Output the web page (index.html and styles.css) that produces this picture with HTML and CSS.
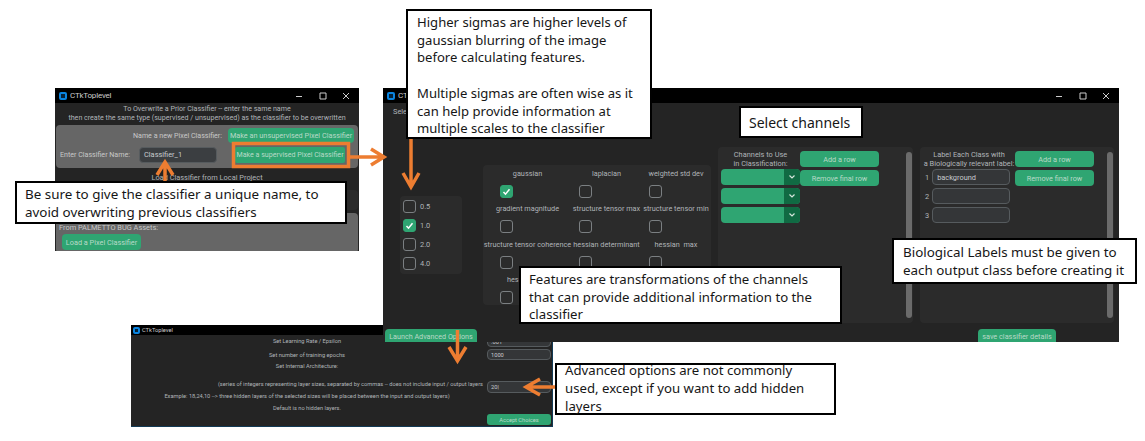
FILE: index.html
```html
<!DOCTYPE html>
<html lang="en">
<head>
  <meta charset="UTF-8" />
  <title>Pixel Classifier Setup</title>
  <link rel="stylesheet" href="styles.css">
</head>
<body>
<div class="canvas">

  <!-- window: advanced options (sits under the main window) -->
  <div class="window win-advanced">
    <div class="titlebar small">
      <span class="app-icon"></span><span class="title">CTkToplevel</span>
    </div>
    <div class="adv-body">
      <div class="adv-text">
        <p>Set Learning Rate / Epsilon</p>
        <p class="adv-m1">Set number of training epochs</p>
        <p>Set Internal Architecture:</p>
        <p class="adv-m2 adv-right">(series of integers representing layer sizes, separated by commas -- does not include input / output layers</p>
        <p class="adv-m3">Example: 18,24,10 --&gt; three hidden layers of the selected sizes will be placed between the input and output layers)</p>
        <p class="adv-m3">Default is no hidden layers.</p>
      </div>
      <div class="adv-inputs">
        <div class="entry adv-entry">.001</div>
        <div class="entry adv-entry adv-m4">1000</div>
        <div class="entry adv-entry adv-m5">20|</div>
        <div class="btn adv-btn">Accept Choices</div>
      </div>
    </div>
  </div>

  <!-- window: name classifier -->
  <div class="window win-name">
    <div class="titlebar">
      <span class="app-icon"></span><span class="title">CTkToplevel</span>
      <span class="controls">
        <svg width="60" height="10" viewBox="0 0 60 10"><path d="M3 5.500h6M27 2h6v6h-6zM50 2l6 6M56 2l-6 6" fill="none" stroke="#ccc" stroke-width="1"/></svg>
      </span>
    </div>
    <div class="name-intro">
      <p>To Overwrite a Prior Classifier -- enter the same name</p>
      <p>then create the same type (supervised / unsupervised) as the classifier to be overwritten</p>
    </div>
    <div class="name-panel">
      <div class="name-row1">
        <span>Name a new Pixel Classifier:</span>
        <div class="btn btn-unsup">Make an unsupervised Pixel Classifier</div>
      </div>
      <div class="name-row2">
        <span class="name-label">Enter Classifier Name:</span>
        <div class="entry name-entry">Classifier_1</div>
        <div class="btn btn-sup">Make a supervised Pixel Classifier</div>
      </div>
    </div>
    <p class="load-heading">Load Classifier from Local Project</p>
    <div class="load-dark"></div>
    <div class="load-panel">
      <p>From PALMETTO BUG Assets:</p>
      <div class="btn btn-load">Load a Pixel Classifier</div>
    </div>
  </div>

  <!-- window: main classifier details -->
  <div class="window win-main">
    <div class="titlebar">
      <span class="app-icon"></span><span class="title">CTkToplevel</span>
      <span class="controls">
        <svg width="60" height="10" viewBox="0 0 60 10"><path d="M3 5.500h6M27 2h6v6h-6zM50 2l6 6M56 2l-6 6" fill="none" stroke="#ccc" stroke-width="1"/></svg>
      </span>
    </div>
    <div class="main-top">Select sigmas</div>
    <div class="main-panels">
      <div class="sigmas">
        <label class="sigma"><span class="check"></span>0.5</label>
        <label class="sigma">
          <span class="check on"><svg width="11" height="11" viewBox="0 0 11 11"><path d="M2.500 6l2 2.200 4-5" fill="none" stroke="#fff" stroke-width="1.500"/></svg></span>1.0
        </label>
        <label class="sigma"><span class="check"></span>2.0</label>
        <label class="sigma"><span class="check"></span>4.0</label>
      </div>

      <div class="features">
        <div class="feature">
          <span>gaussian</span>
          <span class="check on"><svg width="11" height="11" viewBox="0 0 11 11"><path d="M2.500 6l2 2.200 4-5" fill="none" stroke="#fff" stroke-width="1.500"/></svg></span>
        </div>
        <div class="feature"><span>laplacian</span><span class="check"></span></div>
        <div class="feature"><span>weighted std dev</span><span class="check"></span></div>
        <div class="feature"><span>gradient magnitude</span><span class="check"></span></div>
        <div class="feature"><span>structure tensor max</span><span class="check"></span></div>
        <div class="feature"><span>structure tensor min</span><span class="check"></span></div>
        <div class="feature"><span>structure tensor coherence</span><span class="check"></span></div>
        <div class="feature"><span>hessian determinant</span><span class="check"></span></div>
        <div class="feature"><span>hessian&nbsp; max</span><span class="check"></span></div>
        <div class="feature"><span>hessian&nbsp; min</span><span class="check"></span></div>
      </div>

      <div class="table-panel">
        <div class="table-col">
          <p class="table-head">Channels to Use<br>in Classification:</p>
          <div class="dropdown"><span class="drop-arrow"><svg width="8" height="6" viewBox="0 0 8 6"><path d="M1.500 1.500L4 4l2.500-2.500" fill="none" stroke="#d5e5dc" stroke-width="1.200"/></svg></span></div>
          <div class="dropdown"><span class="drop-arrow"><svg width="8" height="6" viewBox="0 0 8 6"><path d="M1.500 1.500L4 4l2.500-2.500" fill="none" stroke="#d5e5dc" stroke-width="1.200"/></svg></span></div>
          <div class="dropdown"><span class="drop-arrow"><svg width="8" height="6" viewBox="0 0 8 6"><path d="M1.500 1.500L4 4l2.500-2.500" fill="none" stroke="#d5e5dc" stroke-width="1.200"/></svg></span></div>
        </div>
        <div class="table-btns">
          <div class="btn">Add a row</div>
          <div class="btn">Remove final row</div>
        </div>
        <div class="scroll"></div>
      </div>

      <div class="table-panel labels-panel">
        <div class="table-col">
          <p class="table-head">Label Each Class with<br>a Biologically relevant label:</p>
          <div class="label-row"><span>1</span><div class="entry">background</div></div>
          <div class="label-row"><span>2</span><div class="entry"></div></div>
          <div class="label-row"><span>3</span><div class="entry"></div></div>
        </div>
        <div class="table-btns">
          <div class="btn">Add a row</div>
          <div class="btn">Remove final row</div>
        </div>
        <div class="scroll"></div>
      </div>
    </div>
    <div class="main-footer">
      <div class="btn btn-launch">Launch Advanced Options</div>
      <div class="btn btn-save">save classifier details</div>
    </div>
  </div>

  <!-- orange highlight + arrows -->
  <svg class="arrows" width="1145" height="441" viewBox="0 0 1145 441">
    <rect x="233.500" y="143.500" width="115" height="23" />
    <path d="M349 157H383M371 149l13 8-13 8" />
    <path d="M165 181V163M157 175l8-13 8 13" />
    <path d="M411 139V186M403 173l8 14 8-14" />
    <path d="M457.500 330V360M449 347l8.500 14 8.500-14" />
    <path d="M555 387H527M540 379l-14 8 14 8" />
  </svg>

  <!-- callouts -->
  <div class="callout c-unique">Be sure to give the classifier a unique name, to<br>avoid overwriting previous classifiers</div>
  <div class="callout c-sigmas">Higher sigmas are higher levels of<br>gaussian blurring of the image<br>before calculating features.<br><br>Multiple sigmas are often wise as it<br>can help provide information at<br>multiple scales to the classifier</div>
  <div class="callout c-channels">Select channels</div>
  <div class="callout c-features">Features are transformations of the channels<br>that can provide additional information to the<br>classifier</div>
  <div class="callout c-bio">Biological Labels must be given to<br>each output class before creating it</div>
  <div class="callout c-advanced"><p>Advanced options are not commonly<br>used, except if you want to add hidden<br>layers</p></div>
</div>
</body>
</html>
```

FILE: styles.css
```css
* {
  box-sizing: border-box;
}
body {
  margin: 0;
  background-color: white;
  font-family: Roboto, Arial, sans-serif;
}
p {
  margin: 0;
}
.canvas {
  position: relative;
  width: 1145px;
  height: 441px;
  overflow: hidden;
  background-color: white;
}

/* windows */
.window {
  position: absolute;
  background-color: #242424;
  color: #b0b4b8;
  font-size: 7.400px;
  overflow: hidden;
}
.win-name {
  left: 55px;
  top: 88px;
  width: 304px;
  height: 163px;
}
.win-main {
  left: 383px;
  top: 88px;
  width: 736px;
  height: 254px;
}
.win-advanced {
  left: 131px;
  top: 325px;
  width: 422px;
  height: 102px;
  font-size: 5.700px;
  border-right: 1px solid #123a55;
  border-bottom: 1px solid #123a55;
}
.titlebar {
  display: flex;
  align-items: center;
  height: 15px;
  padding-left: 4px;
  background-color: black;
  color: #ccc;
  font-size: 8px;
  letter-spacing: -0.2px;
}
.titlebar.small {
  height: 10px;
  padding-left: 2px;
  font-size: 5.700px;
  letter-spacing: 0;
}
.app-icon {
  width: 8px;
  height: 8px;
  margin-right: 3px;
  border: 2px solid #0a84e0;
  border-radius: 2px;
  background-color: #05233a;
}
.titlebar.small .app-icon {
  width: 7px;
  height: 7px;
  margin-right: 2px;
}
.controls {
  display: flex;
  margin-left: auto;
  margin-right: 6px;
}

/* shared widgets */
.btn {
  display: flex;
  align-items: center;
  justify-content: center;
  border-radius: 4px;
  background-color: #2fa572;
  color: #b9dac8;
  font-size: 7.300px;
  white-space: nowrap;
}
.entry {
  display: flex;
  align-items: center;
  padding-left: 4px;
  border: 1px solid #565b5e;
  border-radius: 4px;
  background-color: #343638;
  color: #c8cbce;
}
.check {
  display: flex;
  align-items: center;
  justify-content: center;
  width: 13px;
  height: 13px;
  border: 1.500px solid #7b7f82;
  border-radius: 3px;
  flex-shrink: 0;
}
.check.on {
  border-color: #2fa572;
  background-color: #2fa572;
}

/* name window */
.name-intro {
  height: 22px;
  padding-top: 1px;
  line-height: 9px;
  text-align: center;
  font-size: 7.100px;
  white-space: nowrap;
}
.name-panel {
  height: 43px;
  margin: 0 1px;
  padding: 3px 4px 0 4px;
  border-radius: 4px;
  background-color: #666;
  color: #c8c8c8;
  font-size: 7.100px;
}
.name-row1 {
  display: flex;
  justify-content: flex-end;
  align-items: center;
  gap: 6px;
  height: 15px;
}
.btn-unsup {
  width: 126px;
  height: 15px;
}
.name-row2 {
  display: flex;
  align-items: center;
  height: 17px;
  margin-top: 3px;
  white-space: nowrap;
}
.name-label {
  width: 79px;
}
.name-entry {
  width: 78px;
  height: 16px;
  background-color: #3b3e41;
  font-size: 7.400px;
}
.btn-sup {
  width: 110px;
  height: 16px;
  margin-left: 18px;
  border-radius: 2px;
  font-size: 7.100px;
}
.load-heading {
  margin-top: 5px;
  text-align: center;
  line-height: 10px;
}
.load-dark {
  height: 20px;
  margin: 7px 1px 3px;
  border-radius: 4px;
  background-color: #2b2b2b;
}
.load-panel {
  height: 40px;
  margin: 0 1px;
  padding: 10px 6px 0 3px;
  border-radius: 4px;
  background-color: #666;
  color: #c8c8c8;
}
.btn-load {
  width: 79px;
  height: 16px;
  margin: 2px 0 0 3px;
}

/* main window */
.main-top {
  height: 44px;
  padding: 4px 0 0 10px;
  line-height: 10px;
  white-space: nowrap;
}
.main-panels {
  display: flex;
  align-items: flex-start;
  height: 176px;
  padding-left: 17px;
}
.sigmas {
  display: flex;
  flex-direction: column;
  gap: 6.300px;
  width: 62px;
  height: 78px;
  margin: 49px 21px 0 0;
  padding: 3.500px 3px;
  border-radius: 4px;
  background-color: #2b2b2b;
}
.sigma {
  display: flex;
  align-items: center;
  gap: 4px;
}
.features {
  display: grid;
  grid-template-columns: 89px 69px 70px;
  grid-auto-rows: 35.300px;
  width: 228px;
  height: 140px;
  margin: 18px 7px 0 0;
  padding-top: 4px;
  border-radius: 4px;
  background-color: #2b2b2b;
  overflow: hidden;
}
.feature {
  display: flex;
  flex-direction: column;
  align-items: center;
  gap: 6px;
  line-height: 10px;
  white-space: nowrap;
  font-size: 7.300px;
}
/* checkbox sits left of the centred label */
.feature .check {
  margin-right: 42px;
}
.table-panel {
  display: flex;
  position: relative;
  width: 195px;
  height: 176px;
  margin-right: 7px;
  padding: 3px 0 0 3px;
  border-radius: 4px;
  background-color: #2b2b2b;
}
.labels-panel {
  width: 194px;
  margin-right: 0;
}
.table-col {
  display: flex;
  flex-direction: column;
  gap: 3px;
  width: 79px;
}
.labels-panel .table-col {
  width: 92px;
}
.table-head {
  height: 16px;
  margin-bottom: 0;
  line-height: 9px;
  text-align: center;
  white-space: nowrap;
}
.dropdown {
  display: flex;
  justify-content: flex-end;
  height: 16px;
  border-radius: 4px;
  background-color: #2fa572;
  overflow: hidden;
}
.drop-arrow {
  display: flex;
  align-items: center;
  justify-content: center;
  width: 16px;
  background-color: #106a43;
}
.label-row {
  display: flex;
  align-items: center;
  gap: 3px;
  height: 16px;
  padding-left: 2px;
}
.label-row .entry {
  width: 78px;
  height: 16px;
}
.table-btns {
  display: flex;
  flex-direction: column;
  gap: 3px;
  width: 79px;
  margin-top: 1px;
}
.table-btns .btn {
  height: 16px;
}
.scroll {
  position: absolute;
  top: 5px;
  right: 1px;
  width: 6px;
  height: 166px;
  border-radius: 3px;
  background-color: #6b6b6b;
}
.main-footer {
  display: flex;
  justify-content: space-between;
  padding: 6px 63px 0 2px;
}
.btn-launch {
  width: 92px;
  height: 14px;
  border-radius: 4px 4px 0 0;
  font-size: 7.200px;
}
.btn-save {
  width: 78px;
  height: 14px;
  border-radius: 4px 4px 0 0;
}

/* advanced window */
.adv-body {
  display: flex;
  padding-top: 1px;
}
.adv-text {
  width: 352px;
  text-align: center;
  line-height: 11px;
  white-space: nowrap;
}
.adv-m1 {
  margin-top: 2.500px;
}
.adv-m2 {
  margin-top: 7px;
}
.adv-m3 {
  margin-top: 1px;
}
.adv-right {
  text-align: right;
}
.adv-inputs {
  width: 64px;
  margin-left: 4px;
}
.adv-entry {
  height: 11px;
  padding-left: 3px;
}
.adv-m4 {
  margin-top: 2px;
}
.adv-m5 {
  height: 12px;
  margin-top: 21px;
}
.adv-btn {
  height: 11px;
  margin-top: 21px;
  border-radius: 3px;
  font-size: 5.700px;
}

/* highlight and arrows */
.arrows {
  position: absolute;
  left: 0;
  top: 0;
  fill: none;
  stroke: #ed7d31;
  stroke-width: 3.500;
}

/* callouts */
.callout {
  position: absolute;
  padding: 3px 0 0 8px;
  border: 2px solid black;
  background-color: white;
  color: #161616;
  font-family: "Noto Sans", Arial, sans-serif;
  font-size: 13.200px;
  line-height: 17.700px;
  white-space: nowrap;
}
.c-unique {
  left: 15px;
  top: 181px;
  width: 332px;
  height: 43px;
  font-size: 13.400px;
}
.c-sigmas {
  left: 406px;
  top: 9px;
  width: 246px;
  height: 130px;
  padding-left: 9px;
  font-size: 13.100px;
}
.c-channels {
  left: 739px;
  top: 106px;
  width: 124px;
  height: 32px;
  padding-top: 6px;
  font-size: 14px;
}
.c-features {
  left: 519px;
  top: 266px;
  width: 323px;
  height: 58px;
}
.c-bio {
  left: 892px;
  top: 238px;
  width: 245px;
  height: 46px;
  padding: 4px 0 0 9px;
  font-size: 13.400px;
}
/* three lines fill this box a little past its height */
.c-advanced {
  display: flex;
  align-items: center;
  left: 555px;
  top: 363px;
  width: 281px;
  height: 52px;
  padding-top: 0;
}
```
